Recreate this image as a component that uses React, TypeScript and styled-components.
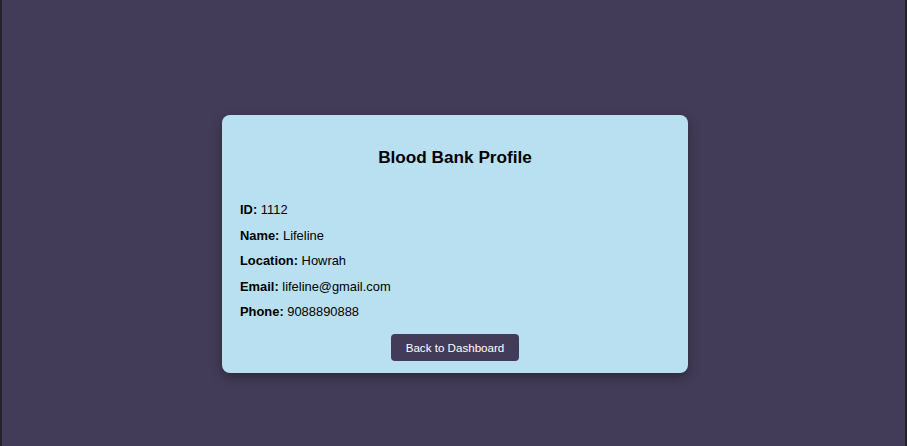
import React from "react";
import styled, { createGlobalStyle } from "styled-components";

const GlobalStyle = createGlobalStyle`
  html, body { margin: 0; padding: 0; }
  body {
    font-family: "Liberation Sans", Arial, sans-serif;
    background: #433c58;
  }
`;

const Page = styled.div`
  box-sizing: border-box;
  width: 100%;
  height: 446px;
  background: #433c58;
  border-left: 2px solid #222228;
  border-right: 2px solid #222228;
  display: flex;
  align-items: center;
  justify-content: center;
  padding: 42px 0 0 3px;
`;

const Card = styled.div`
  box-sizing: border-box;
  width: 466px;
  background: #b9e0f1;
  border-radius: 8px;
  padding: 32px 18px 12px;
  box-shadow: 0 4px 12px rgba(0, 0, 0, 0.35);
  display: flex;
  flex-direction: column;
`;

const Title = styled.h2`
  margin: 0 0 34px;
  font-size: 17.2px;
  line-height: 21px;
  font-weight: bold;
  text-align: center;
  color: #000;
`;

const InfoList = styled.div`
  display: flex;
  flex-direction: column;
  gap: 9.5px;
`;

const Row = styled.p`
  margin: 0;
  font-size: 12.9px;
  line-height: 16px;
  color: #000;
`;

const Label = styled.strong`
  font-weight: bold;
`;

const Button = styled.button`
  align-self: center;
  margin-top: 14px;
  height: 27px;
  padding: 0 15px;
  border: none;
  border-radius: 4px;
  background: #433c58;
  color: #fff;
  font-family: "Liberation Sans", Arial, sans-serif;
  font-size: 11.6px;
  cursor: pointer;
`;

const info = [
  ["ID", "1112"],
  ["Name", "Lifeline"],
  ["Location", "Howrah"],
  ["Email", "lifeline@gmail.com"],
  ["Phone", "9088890888"],
];

export default function App() {
  return (
    <>
      <GlobalStyle />
      <Page>
        <Card>
          <Title>Blood Bank Profile</Title>
          <InfoList>
            {info.map(([k, v]) => (
              <Row key={k}>
                <Label>{k}:</Label> {v}
              </Row>
            ))}
          </InfoList>
          <Button>Back to Dashboard</Button>
        </Card>
      </Page>
    </>
  );
}
